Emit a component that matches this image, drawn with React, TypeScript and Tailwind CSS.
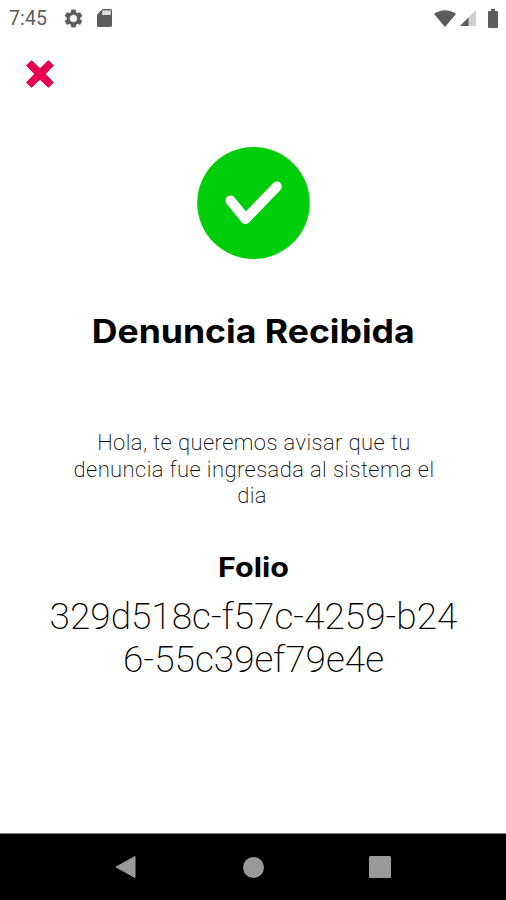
function Gear() {
  return (
    <svg className="h-[21px] w-[21px]" viewBox="0 0 24 24" fill="#5c5c5c">
      <path
        fillRule="evenodd"
        stroke="#5c5c5c"
        strokeWidth="0.4"
        d="M19.43 12.98c.04-.32.07-.64.07-.98s-.03-.66-.07-.98l2.11-1.65c.19-.15.24-.42.12-.64l-2-3.46c-.12-.22-.39-.3-.61-.22l-2.49 1c-.52-.4-1.08-.73-1.69-.98l-.38-2.65A.488.488 0 0 0 14 2h-4c-.25 0-.46.18-.49.42l-.38 2.65c-.61.25-1.17.59-1.69.98l-2.49-1c-.23-.09-.49 0-.61.22l-2 3.46c-.13.22-.07.49.12.64l2.11 1.65c-.04.32-.07.65-.07.98s.03.66.07.98l-2.11 1.65c-.19.15-.24.42-.12.64l2 3.46c.12.22.39.3.61.22l2.49-1c.52.4 1.08.73 1.69.98l.38 2.65c.03.24.24.42.49.42h4c.25 0 .46-.18.49-.42l.38-2.65c.61-.25 1.17-.59 1.69-.98l2.49 1c.23.09.49 0 .61-.22l2-3.46c.12-.22.07-.49-.12-.64l-2.11-1.65zM12 16.3a4.3 4.3 0 1 1 0-8.600 4.300 4.300 0 0 1 0 8.600z"
      />
    </svg>
  );
}

function SdCard() {
  return (
    <svg className="ml-[13px] h-[18px] w-[15px]" viewBox="0 0 15 18">
      <path d="M5.500 0H13.500Q15 0 15 1.500V16.500Q15 18 13.500 18H1.500Q0 18 0 16.500V5.500Z" fill="#5c5c5c" />
      <path d="M5.500 1.500H13.500V6H5.500Z" fill="#bdbdbd" />
      <path d="M5.500 1.500H7.500V6H5.500ZM8.500 1.500H10.500V6H8.500ZM11.500 1.500H13.500V6H11.500Z" fill="#ededed" />
    </svg>
  );
}

function StatusBar() {
  return (
    <div className="flex h-9 items-center justify-between pr-[8px] pl-[9px]">
      <div className="flex items-center">
        <span className="w-[54px] pt-px text-[19.500px] leading-9 tracking-[0.1px] text-[#5c5c5c]">7:45</span>
        <Gear />
        <SdCard />
      </div>
      <div className="flex items-center">
        <svg className="h-[17px] w-[22px]" viewBox="0 0 22 17">
          <path d="M0 4Q11 -3.500 22 4L11 17Z" fill="#5c5c5c" />
        </svg>
        <svg className="ml-[4px] h-4 w-4" viewBox="0 0 16 16">
          <path d="M16 0V16H0Z" fill="#cfcfcf" />
          <path d="M8.500 7.500V16H0Z" fill="#5c5c5c" />
        </svg>
        <svg className="ml-[12px] h-[19px] w-[10px]" viewBox="0 0 10 19">
          <path d="M3 0H7V2H9Q10 2 10 3V18Q10 19 9 19H1Q0 19 0 18V3Q0 2 1 2H3Z" fill="#5c5c5c" />
        </svg>
      </div>
    </div>
  );
}

function NavBar() {
  return (
    <nav className="flex h-[67px] items-center border-t border-[#777] bg-black pl-[115px]">
      <svg className="h-6 w-[21px]" viewBox="0 0 21 24">
        <path d="M20 1.500V22.500L1 12Z" fill="#999" stroke="#999" strokeLinejoin="round" />
      </svg>
      <div className="ml-[107px] h-[21px] w-[21px] rounded-full bg-[#999]" />
      <div className="ml-[105px] h-[22px] w-[22px] rounded-[1.500px] bg-[#999]" />
    </nav>
  );
}

export default function App() {
  return (
    <main className="flex h-[900px] w-[506px] flex-col overflow-hidden bg-white font-['Roboto',sans-serif] text-black">
      <StatusBar />
      <button className="mt-[24px] ml-[26px] h-[28px] w-[28px]" aria-label="Cerrar">
        <svg className="h-[28px] w-[28px]" viewBox="0 0 28 28">
          <path
            d="M5.500 0.700L14 8.700L22.500 0.700L27.300 5.500L19.300 14L27.300 22.500L22.500 27.300L14 19.300L5.500 27.300L0.700 22.500L8.700 14L0.700 5.500Z"
            fill="#e6004f"
            stroke="#e6004f"
            strokeLinejoin="round"
          />
        </svg>
      </button>
      <section className="flex flex-1 flex-col items-center pt-[59px] text-center">
        <svg className="h-[112px] w-[113px]" viewBox="0 0 113 112">
          <ellipse cx="56.500" cy="56" rx="56.300" ry="56" fill="#00ce0b" />
          <path
            d="M33.500 53.500L48.500 72L79.800 39.500"
            fill="none"
            stroke="#fff"
            strokeWidth="10"
            strokeLinecap="round"
            strokeLinejoin="round"
          />
        </svg>
        <h1 className="mt-[53px] scale-x-[1.112] font-['Inter',sans-serif] text-[32px] leading-10 font-bold whitespace-nowrap">
          Denuncia Recibida
        </h1>
        <p className="mt-[78px] ml-[2px] text-[22px] leading-[26.500px] font-extralight tracking-[0.41px]">
          Hola, te queremos avisar que tu
          <br />
          denuncia fue ingresada al sistema el
          <br />
          <span className="relative -left-[2px]">dia</span>
        </p>
        <h2 className="mt-[42px] scale-x-[1.13] font-['Inter',sans-serif] text-[27px] leading-8 font-bold">Folio</h2>
        <p className="mt-[11px] ml-px text-[37px] leading-[43px] font-extralight whitespace-nowrap">
          329d518c-f57c-4259-b24
          <br />
          6-55c39ef79e4e
        </p>
      </section>
      <NavBar />
    </main>
  );
}
